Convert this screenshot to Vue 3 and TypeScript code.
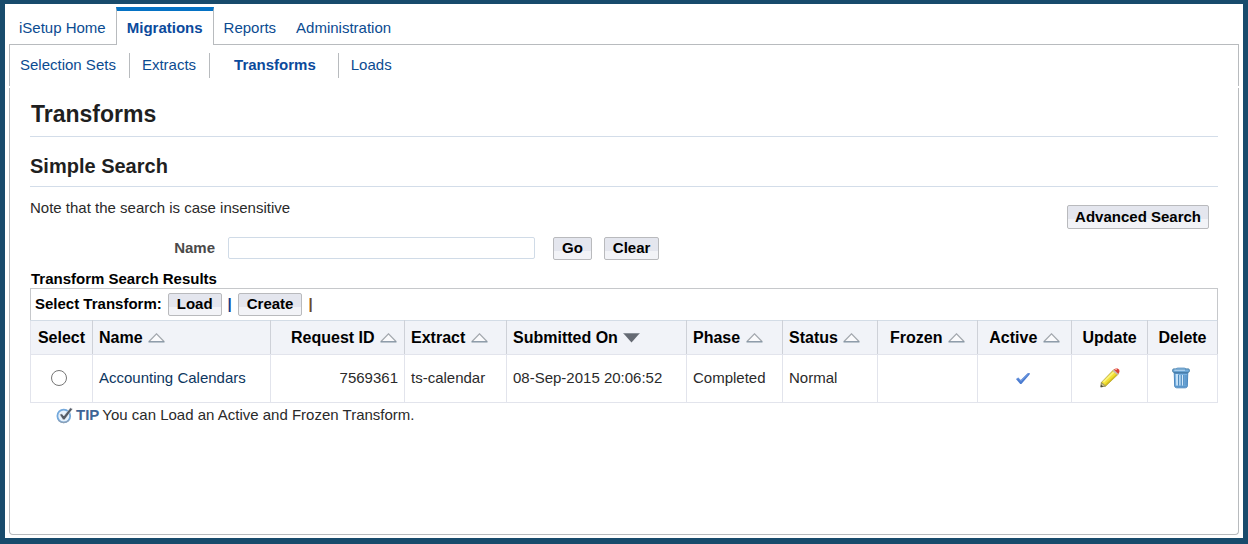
<script setup lang="ts">
import { ref } from 'vue'

interface Column {
  key: string
  label: string
  sort?: 'none' | 'down'
  align: 'left' | 'right' | 'center'
}

const tabs = ['iSetup Home', 'Migrations', 'Reports', 'Administration']
const activeTab = ref('Migrations')

const subTabs = ['Selection Sets', 'Extracts', 'Transforms', 'Loads']
const activeSubTab = ref('Transforms')

const columns: Column[] = [
  { key: 'select', label: 'Select', align: 'center' },
  { key: 'name', label: 'Name', sort: 'none', align: 'left' },
  { key: 'request', label: 'Request ID', sort: 'none', align: 'right' },
  { key: 'extract', label: 'Extract', sort: 'none', align: 'left' },
  { key: 'submitted', label: 'Submitted On', sort: 'down', align: 'left' },
  { key: 'phase', label: 'Phase', sort: 'none', align: 'left' },
  { key: 'status', label: 'Status', sort: 'none', align: 'left' },
  { key: 'frozen', label: 'Frozen', sort: 'none', align: 'center' },
  { key: 'active', label: 'Active', sort: 'none', align: 'center' },
  { key: 'update', label: 'Update', align: 'center' },
  { key: 'delete', label: 'Delete', align: 'center' },
]

const rows = [
  {
    name: 'Accounting Calendars',
    request: '7569361',
    extract: 'ts-calendar',
    submitted: '08-Sep-2015 20:06:52',
    phase: 'Completed',
    status: 'Normal',
  },
]

const searchName = ref('')
const selected = ref('')
</script>

<template>
  <div class="page">
    <nav class="tabs">
      <a
        v-for="tab in tabs"
        :key="tab"
        href="#"
        class="tab"
        :class="{ active: tab === activeTab }"
        @click.prevent="activeTab = tab"
      >{{ tab }}</a>
    </nav>

    <nav class="subtabs">
      <a
        v-for="tab in subTabs"
        :key="tab"
        href="#"
        class="subtab"
        :class="{ active: tab === activeSubTab }"
        @click.prevent="activeSubTab = tab"
      >{{ tab }}</a>
    </nav>

    <main class="panel">
      <h1>Transforms</h1>
      <h2>Simple Search</h2>

      <div class="note-row">
        <p class="note">Note that the search is case insensitive</p>
        <button type="button" class="btn advanced">Advanced Search</button>
      </div>

      <form class="search" @submit.prevent>
        <label for="name">Name</label>
        <input id="name" v-model="searchName" type="text" />
        <button type="submit" class="btn go">Go</button>
        <button type="button" class="btn" @click="searchName = ''">Clear</button>
      </form>

      <h3>Transform Search Results</h3>
      <div class="toolbar">
        <span>Select Transform:</span>
        <button type="button" class="btn">Load</button>
        <span class="bar blue">|</span>
        <button type="button" class="btn">Create</button>
        <span class="bar">|</span>
      </div>
      <table>
        <colgroup>
          <col v-for="col in columns" :key="col.key" :class="'col-' + col.key" />
        </colgroup>
        <thead>
          <tr>
            <th v-for="col in columns" :key="col.key" scope="col" :class="col.align">
              {{ col.label }}
              <svg v-if="col.sort === 'none'" class="sort" width="17" height="10" viewBox="0 0 17 10">
                <path d="M1 8.5 L8.5 0.8 L16 8.5" fill="#fafafc" stroke="#a3a8ae" stroke-width="1.2" />
                <path d="M0.5 8.8 H16.5" stroke="#8494a2" stroke-width="1.4" />
              </svg>
              <svg v-else-if="col.sort === 'down'" class="sort" width="17" height="10" viewBox="0 0 17 10">
                <path d="M0.5 0.5 H16.5 L8.5 9.5 Z" fill="#656a73" />
                <path d="M0.5 0.5 H16.5" stroke="#8a9098" />
              </svg>
            </th>
          </tr>
        </thead>
        <tbody>
          <tr v-for="row in rows" :key="row.request">
            <td class="center">
              <input v-model="selected" type="radio" name="transform" :value="row.request" :aria-label="row.name" />
            </td>
            <td><a href="#" @click.prevent>{{ row.name }}</a></td>
            <td class="right">{{ row.request }}</td>
            <td>{{ row.extract }}</td>
            <td>{{ row.submitted }}</td>
            <td>{{ row.phase }}</td>
            <td>{{ row.status }}</td>
            <td></td>
            <td class="center">
              <svg class="icon" width="16" height="14" viewBox="0 0 16 14" role="img" aria-label="Active">
                <path d="M1 8 L3.2 6.6 L5.8 9 L12.6 2.2 L14.8 2 L14.6 3.4 L6.4 13 L5.2 13 Z" fill="#4a7bd0" />
                <path d="M2 8 L3.2 7.4 L5.8 10.2 L13.4 3" fill="none" stroke="#7ea4e6" stroke-width="0.8" />
              </svg>
            </td>
            <td class="center update">
              <button type="button" class="icon-btn" aria-label="Update">
                <svg width="20" height="20" viewBox="0 0 20 20">
                  <path d="M1 18.7 L1.4 14.4 L13.6 1.8 L18.6 5.8 L5.8 18 Z" fill="#f2e033" stroke="#a39335" stroke-width="0.7" />
                  <path d="M3.4 14.2 L14 3.8" stroke="#fbf27c" stroke-width="1.8" />
                  <path d="M5.4 17.2 L17.4 6" stroke="#d2bc22" stroke-width="1.4" />
                  <path d="M0.8 19 L1.5 14.6 L5.6 18 Z" fill="#cfc48c" stroke="#83805c" stroke-width="0.7" />
                  <path d="M0.6 19.2 L1 16.8 L3.4 18.7 Z" fill="#4a4a40" />
                  <path d="M12.6 2.9 L14.2 1.3 L18.8 5.4 L17.2 7 Z" fill="#c9bcb4" />
                  <path d="M13.8 1.6 Q15.2 0.2 17.6 0.6 Q20 1.6 19.5 4 L18.2 5.8 Z" fill="#dd4036" />
                  <path d="M14.8 1.7 Q16 1 17 1.6" stroke="#f7a79c" fill="none" />
                </svg>
              </button>
            </td>
            <td class="center">
              <button type="button" class="icon-btn" aria-label="Delete">
                <svg width="18" height="22" viewBox="0 0 18 22">
                  <path d="M2.2 5 L2.7 19.2 Q2.9 20.6 4.6 20.8 H13.4 Q15.1 20.6 15.3 19.2 L15.8 5 Z" fill="#78b1e1" stroke="#4a86bd" />
                  <path d="M3.8 7 L4.2 18.6 H6.2 L6 7 Z" fill="#c6e1f7" />
                  <path d="M6.6 8 V18.6 M9.2 8 V18.6 M11.8 8 V18.6 M14 8 V18.6" stroke="#4380b6" stroke-width="0.9" />
                  <path d="M7.9 8 V18.6 M10.5 8 V18.6" stroke="#d2e8fa" stroke-width="1.1" />
                  <path d="M3.2 19.4 H14.8" stroke="#5793c9" />
                  <path d="M2.6 6.2 H15.4" stroke="#386c9e" stroke-width="0.8" />
                  <rect x="0.7" y="1.9" width="16.6" height="3.4" rx="1" fill="#74addd" stroke="#41779f" stroke-width="0.9" />
                  <path d="M4 1.9 Q4.6 1 6 1 H12 Q13.4 1 14 1.9 Z" fill="#9cc8ea" stroke="#5e93c0" stroke-width="0.8" />
                  <path d="M2.4 3.2 H13" stroke="#c0def5" />
                </svg>
              </button>
            </td>
          </tr>
        </tbody>
      </table>

      <p class="tip">
        <svg width="17" height="17" viewBox="0 0 17 17" aria-hidden="true">
          <circle cx="7.8" cy="9" r="6.4" fill="#e8f2fc" stroke="#74a9dc" stroke-width="1.8" />
          <path d="M2.4 13.4 Q7.6 18 12.8 13.4" fill="none" stroke="#90a0b2" stroke-width="1.2" />
          <path d="M3.6 7.4 L6 6.8 L7.8 9 L14.4 0.8 L16.6 2 L8.6 12.8 L7 12.8 Z" fill="#555b64" stroke="#eef3f8" stroke-width="0.5" />
        </svg>
        <strong>TIP</strong>
        <span>You can Load an Active and Frozen Transform.</span>
      </p>
    </main>
  </div>
</template>

<style>
body {
  margin: 0;
}
</style>

<style scoped>
.page {
  box-sizing: border-box;
  min-height: 100vh;
  display: flex;
  flex-direction: column;
  padding: 3px 4px;
  border: solid #184b6c;
  border-width: 4px 5px 6px;
  background: #fff;
  color: #2a2a2a;
  font: 15px/20px 'Liberation Sans', Arial, sans-serif;
}

a {
  color: #0b4b91;
  text-decoration: none;
}

.tabs {
  display: flex;
  height: 37px;
  border-bottom: 1px solid #b8bbbe;
}

.tab {
  padding: 11px 10px 7px;
}

.tab.active {
  margin-bottom: -1px;
  padding-top: 7px;
  border: 1px solid #b8bbbe;
  border-width: 4px 1px 0;
  border-top-color: #0572c4;
  background: #fff;
  color: #0b4a9c;
  font-weight: bold;
}

.subtabs {
  display: flex;
  align-items: flex-start;
  height: 33px;
  padding-top: 8px;
  border: solid #b8bbbe;
  border-width: 0 1px;
}

.subtab {
  padding: 2px 13px 3px 12px;
  border-left: 1px solid #b8bbbe;
}

.subtab:first-child {
  padding-left: 10px;
  border-left: 0;
}

.subtab.active {
  padding-right: 22px;
  padding-left: 24px;
  color: #0b4a9c;
  font-weight: bold;
}

.panel {
  flex: 1;
  margin-top: 2px;
  padding: 12px 20px;
  border: 1px solid #b8bbbe;
  border-top: 0;
  border-radius: 0 0 4px 4px;
}

h1,
h2 {
  margin: 0;
  padding-bottom: 8px;
  border-bottom: 1px solid #d3dde9;
  color: #1f1f1f;
}

h1 {
  padding-left: 1px;
  font-size: 23px;
  line-height: 28px;
}

h2 {
  margin-top: 17px;
  font-size: 20px;
  line-height: 24px;
}

.note-row {
  display: flex;
  justify-content: space-between;
  padding: 11px 9px 0 0;
}

.note {
  margin: 0;
}

.btn {
  box-sizing: border-box;
  height: 23px;
  padding: 0 8px 2px;
  border: 1px solid #b9babd;
  border-radius: 2px;
  background: linear-gradient(#e4e6ee 60%, #f2f3f7 60%);
  color: #000;
  font: bold 15px/18px 'Liberation Sans', Arial, sans-serif;
}

.advanced {
  height: 24px;
  margin-top: 7px;
  padding: 0 7px;
}

.search {
  display: flex;
  align-items: center;
  margin-top: 8px;
}

.search label {
  width: 185px;
  padding-bottom: 2px;
  color: #4a4a4a;
  font-weight: bold;
  text-align: right;
}

.search input {
  box-sizing: border-box;
  width: 307px;
  height: 22px;
  margin: 0 18px 1px 13px;
  border: 1px solid #d0dbe7;
  border-radius: 2px;
  font: inherit;
}

.go {
  margin-right: 12px;
}

h3 {
  margin: 10px 0 0;
  padding-left: 1px;
  color: #000;
  font-size: 15px;
  line-height: 18px;
}

.toolbar {
  display: flex;
  align-items: center;
  gap: 6px;
  height: 31px;
  padding-left: 4px;
  border: 1px solid #c6c8cb;
  border-bottom: 0;
  color: #000;
  font-weight: bold;
}

.toolbar span {
  padding-bottom: 2px;
}

.bar {
  color: #6b4a28;
}

.bar.blue {
  color: #123c8c;
}

table {
  width: 100%;
  border-collapse: collapse;
  table-layout: fixed;
}

.col-select { width: 62px; }
.col-name { width: 178px; }
.col-request { width: 134px; }
.col-extract { width: 102px; }
.col-submitted { width: 180px; }
.col-phase { width: 96px; }
.col-status { width: 95px; }
.col-frozen { width: 100px; }
.col-active { width: 94px; }
.col-update { width: 76px; }
.col-delete { width: 70px; }

th,
td {
  box-sizing: border-box;
  padding: 0 6px;
  border: 1px solid #e2e4ec;
  text-align: left;
  white-space: nowrap;
}

th {
  height: 34px;
  padding: 0 0 0 6px;
  border-top-color: #d3dce6;
  border-right-color: #ced1d8;
  background: #f1f3f8;
  color: #000;
  font-size: 16px;
}

.sort {
  margin-left: 1px;
}

td {
  height: 48px;
  padding-bottom: 1px;
}

td a {
  color: #0c3660;
}

th.center {
  padding: 0;
}

th.right {
  padding-right: 7px;
}

.right {
  text-align: right;
}

.center {
  text-align: center;
}

td.center {
  padding-right: 9px;
}

td.update {
  padding-right: 6px;
}

td input {
  display: block;
  width: 16px;
  height: 16px;
  margin: 0 auto 0 14px;
}

.icon {
  display: block;
  margin: 0 auto;
}

.icon-btn {
  display: block;
  margin: 0 auto;
  padding: 0;
  border: 0;
  background: none;
}

.icon-btn svg {
  display: block;
}

.tip {
  display: flex;
  align-items: center;
  gap: 3px;
  margin: 2px 0 0 26px;
}

.tip strong {
  color: #3d6496;
}
</style>
